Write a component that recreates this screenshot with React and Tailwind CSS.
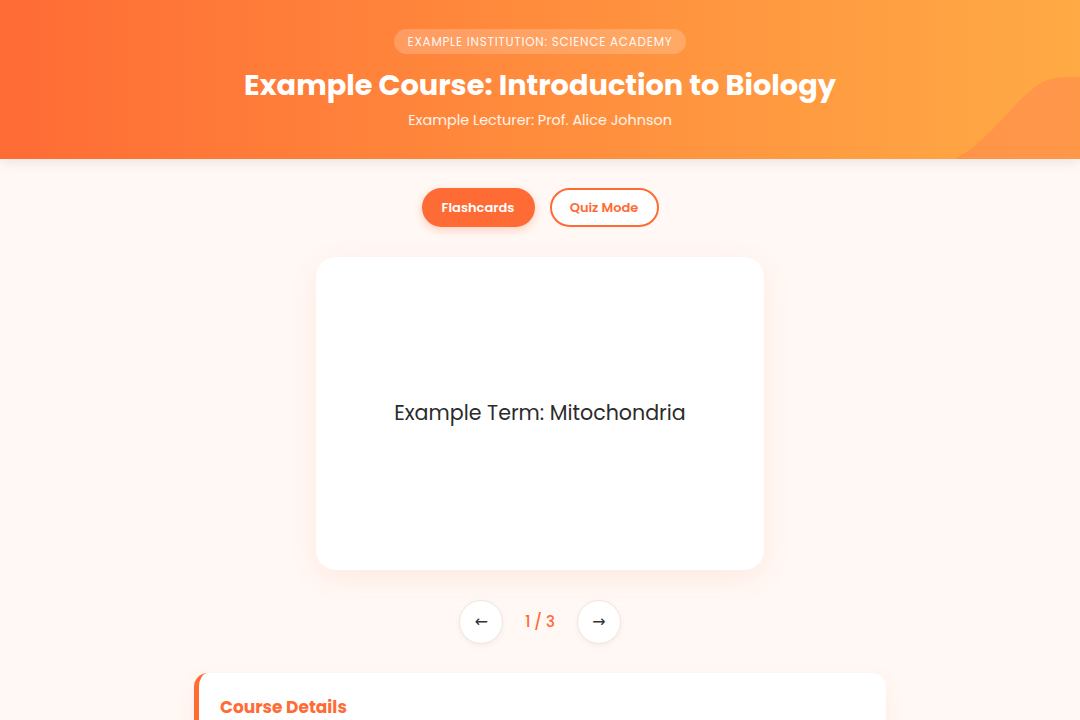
import React, { useState } from 'react';

const font = { fontFamily: 'Poppins, Inter, "DejaVu Sans", sans-serif' };

const cards = [
  { term: 'Example Term: Mitochondria', def: 'The powerhouse of the cell.' },
  { term: 'Example Term: Ribosome', def: 'Site of protein synthesis.' },
  { term: 'Example Term: Nucleus', def: 'Holds the genetic material.' },
];

const App = () => {
  const [mode, setMode] = useState('flash');
  const [index, setIndex] = useState(0);

  return (
    <div className="min-h-screen bg-[#fff8f5] text-[#333]" style={font}>
      <header className="relative overflow-hidden bg-gradient-to-r from-[#ff6b35] to-[#ffaa45] h-[159px] flex flex-col items-center pt-[29px] shadow-[0_4px_12px_rgba(0,0,0,0.08)]">
        <svg className="absolute right-0 bottom-0" width="125" height="82" viewBox="0 0 125 82" preserveAspectRatio="none">
          <path d="M0 82 C40 60 60 20 88 5 C100 -1 115 0 125 0 L125 82 Z" fill="#ff8a4c" opacity="0.6" />
        </svg>
        <div className="rounded-full bg-white/20 px-[14px] h-[25px] flex items-center text-[12px] tracking-[0.06em] text-white/95">
          EXAMPLE INSTITUTION: SCIENCE ACADEMY
        </div>
        <h1 className="mt-[11px] text-[28.8px] leading-[40px] font-bold text-white">
          Example Course: Introduction to Biology
        </h1>
        <p className="mt-[5px] text-[14.4px] text-white/90">Example Lecturer: Prof. Alice Johnson</p>
      </header>

      <div className="flex justify-center gap-[15px] mt-[29px]">
        <button
          onClick={() => setMode('flash')}
          className={`h-[39px] w-[113px] rounded-full text-[13px] font-semibold border-2 border-[#ff6b35] ${mode === 'flash' ? 'bg-[#ff6b35] text-white shadow-[0_3px_8px_rgba(255,107,53,0.3)]' : 'bg-white text-[#ff6b35]'}`}
        >
          Flashcards
        </button>
        <button
          onClick={() => setMode('quiz')}
          className={`h-[39px] w-[109px] rounded-full text-[13px] font-semibold border-2 border-[#ff6b35] ${mode === 'quiz' ? 'bg-[#ff6b35] text-white' : 'bg-white text-[#ff6b35]'}`}
        >
          Quiz Mode
        </button>
      </div>

      <div className="flex justify-center mt-[30px]">
        <div className="w-[448px] h-[313px] bg-white rounded-[20px] shadow-[0_8px_28px_rgba(255,107,53,0.1)] flex items-center justify-center">
          <span className="text-[20.6px] text-[#2b2b2b]">{cards[index].term}</span>
        </div>
      </div>

      <div className="flex justify-center items-center gap-[22px] mt-[30px]">
        <button
          onClick={() => setIndex((index + 2) % 3)}
          className="w-[44px] h-[44px] rounded-full bg-white border border-[#f3e4dd] shadow-[0_2px_6px_rgba(0,0,0,0.05)] flex items-center justify-center text-[16px] text-[#333]"
          style={{ fontFamily: '"DejaVu Sans", sans-serif' }}
        >
          ←
        </button>
        <span className="text-[15px] font-medium text-[#ff6b35]">{index + 1} / 3</span>
        <button
          onClick={() => setIndex((index + 1) % 3)}
          className="w-[44px] h-[44px] rounded-full bg-white border border-[#f3e4dd] shadow-[0_2px_6px_rgba(0,0,0,0.05)] flex items-center justify-center text-[16px] text-[#333]"
          style={{ fontFamily: '"DejaVu Sans", sans-serif' }}
        >
          →
        </button>
      </div>

      <div className="flex justify-center mt-[29px]">
        <div className="w-[692px] h-[120px] bg-white rounded-[14px] border-l-[5px] border-[#ff6b35] shadow-[0_6px_20px_rgba(255,107,53,0.08)] px-[21px] pt-[22px]">
          <h2 className="text-[17px] font-bold text-[#ff6b35]">Course Details</h2>
        </div>
      </div>
    </div>
  );
};

export default App;
